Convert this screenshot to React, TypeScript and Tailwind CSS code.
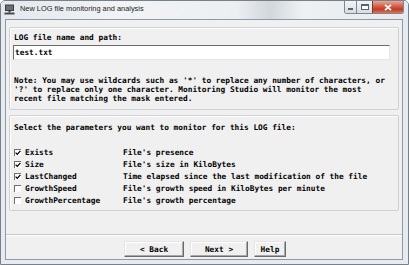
import React from 'react';

const mono = "font-['DejaVu_Sans_Mono','Liberation_Mono',monospace] font-bold text-[7.8px] leading-[9px] text-black";

const params = [
  { name: 'Exists', desc: "File's presence", checked: true },
  { name: 'Size', desc: "File's size in KiloBytes", checked: true },
  { name: 'LastChanged', desc: 'Time elapsed since the last modification of the file', checked: true },
  { name: 'GrowthSpeed', desc: "File's growth speed in KiloBytes per minute", checked: false },
  { name: 'GrowthPercentage', desc: "File's growth percentage", checked: false },
];

function Check({ checked }: { checked: boolean }) {
  return (
    <span className="flex h-[7px] w-[7px] shrink-0 items-center justify-center border-l border-t border-[#6f6f6f] bg-white">
      {checked && (
        <svg viewBox="0 0 6 6" className="h-[6px] w-[6px]">
          <path d="M0.6 2.6 L2.3 4.4 L5.4 0.8" stroke="#000" strokeWidth="1.3" fill="none" />
        </svg>
      )}
    </span>
  );
}

function Btn({ label, w }: { label: string; w: string }) {
  return (
    <button
      type="button"
      className={`${w} ${mono} h-[16px] border border-t-[#e4e4e4] border-l-[#e4e4e4] border-r-[#6a6a6a] border-b-[#6a6a6a] bg-[#f0f0f0] shadow-[inset_-1px_-1px_#a8a8a8,inset_1px_1px_#ffffff]`}
    >
      {label}
    </button>
  );
}

export default function App() {
  return (
    <div className="flex h-[265px] w-[409px] flex-col overflow-hidden rounded-t-[5px] border border-[#76818c] bg-[#e7ebef]">
      {/* title bar */}
      <div className="flex h-[18px] shrink-0 items-start bg-[linear-gradient(90deg,#e4e8ec_0%,#f1f3f5_30%,#eceff2_58%,#d2d7dc_66%,#eef1f3_74%,#e6eaee_100%)]">
        <svg viewBox="0 0 11 11" className="ml-[3px] mt-[3px] h-[11px] w-[11px]">
          <rect x="1" y="0.5" width="9" height="6.5" fill="#3c3c3c" />
          <rect x="2" y="1.5" width="7" height="4.5" fill="#6b6f74" />
          <rect x="4.5" y="7" width="2" height="1.5" fill="#3c3c3c" />
          <rect x="0.5" y="8.5" width="10" height="2" fill="#4a4a4a" />
        </svg>
        <span className="ml-[5px] mt-[3px] font-['Liberation_Sans',Arial,sans-serif] text-[7.4px] leading-[10px] text-[#222]">
          New LOG file monitoring and analysis
        </span>
        <div className="ml-auto mr-[4px] flex h-[13px] overflow-hidden rounded-b-[3px] border border-t-0 border-[#7d8893]">
          <div className="flex w-[11px] items-end justify-center bg-[linear-gradient(#f2f4f6,#d7dde3)] pb-[3px]">
            <span className="h-[2px] w-[5px] border border-[#59636d] bg-white" />
          </div>
          <div className="flex w-[16px] items-center justify-center border-l border-[#7d8893] bg-[linear-gradient(#f2f4f6,#d7dde3)]">
            <span className="h-[6px] w-[8px] border border-[#59636d] bg-white shadow-[inset_0_1px_#59636d]" />
          </div>
          <div className="flex w-[31px] items-center justify-center border-l border-[#7d3a2f] bg-[linear-gradient(#e9a695,#d0563f_50%,#c23c26_70%,#d9745c)]">
            <svg viewBox="0 0 8 7" className="h-[7px] w-[8px]">
              <path d="M1 0.8 L7 6.2 M7 0.8 L1 6.2" stroke="#fff" strokeWidth="1.8" />
            </svg>
          </div>
        </div>
      </div>

      {/* client */}
      <div className="mb-[4px] ml-[4px] mr-[5px] flex flex-1 flex-col border border-[#8e99a5] bg-[#f0f0f0]">
        <div className="px-[3px] pt-[7px]">
          <div className="rounded-[2px] border border-[#cdd1d5] pb-[6px] pl-[3px] pr-[8px] pt-[5px] shadow-[inset_1px_1px_#ffffff]">
            <div className={`${mono} pl-[1px]`}>LOG file name and path:</div>
            <div className={`${mono} mt-[3px] flex h-[15px] items-center border border-b-[#e6e6e6] border-l-[#6b6b6b] border-r-[#e6e6e6] border-t-[#6b6b6b] bg-white pl-[1px]`}>
              test.txt
            </div>
            <div className={`${mono} mt-[16px] pl-[1px]`}>
              <div>Note: You may use wildcards such as '*' to replace any number of characters, or</div>
              <div>'?' to replace only one character. Monitoring Studio will monitor the most</div>
              <div>recent file matching the mask entered.</div>
            </div>
          </div>

          <div className="mt-[5px] rounded-[2px] border border-[#cdd1d5] pb-[4px] pl-[4px] pt-[7px] shadow-[inset_1px_1px_#ffffff]">
            <div className={mono}>Select the parameters you want to monitor for this LOG file:</div>
            <div className="mt-[14px] flex flex-col">
              {params.map((p) => (
                <div key={p.name} className="flex h-[12px] items-center">
                  <Check checked={p.checked} />
                  <span className={`${mono} ml-[4px] w-[98px]`}>{p.name}</span>
                  <span className={mono}>{p.desc}</span>
                </div>
              ))}
            </div>
          </div>
        </div>

        <div className="mt-[23px] h-[2px] border-b border-t border-b-white border-t-[#c4c8cc]" />

        <div className="flex gap-[6px] pl-[118px] pt-[5px]">
          <Btn label="< Back" w="w-[60px]" />
          <Btn label="Next >" w="w-[58px]" />
          <Btn label="Help" w="w-[32px]" />
        </div>
      </div>
    </div>
  );
}
